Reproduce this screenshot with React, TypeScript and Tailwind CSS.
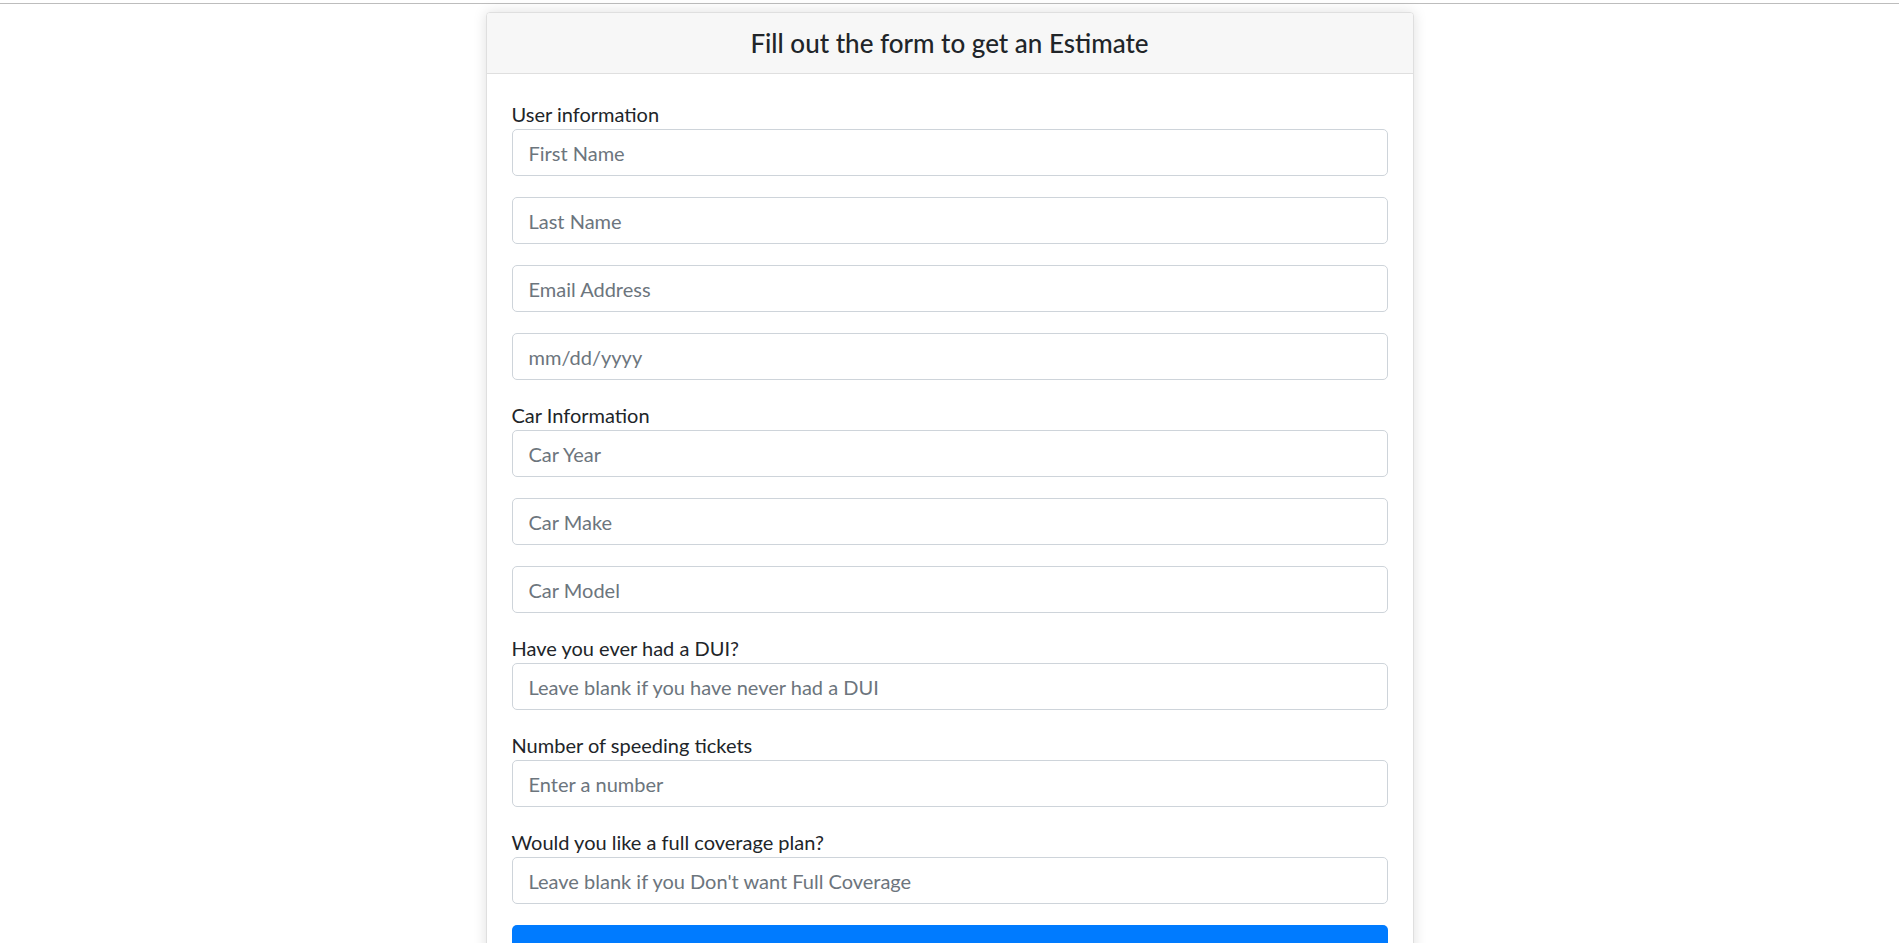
import { useState } from 'react'

const font = { fontFamily: 'Lato, "Liberation Sans", sans-serif' }

type Field = { name: string; placeholder: string; type?: string }

const groups: { label: string; fields: Field[] }[] = [
  {
    label: 'User information',
    fields: [
      { name: 'firstName', placeholder: 'First Name' },
      { name: 'lastName', placeholder: 'Last Name' },
      { name: 'email', placeholder: 'Email Address', type: 'email' },
      { name: 'dob', placeholder: 'mm/dd/yyyy' },
    ],
  },
  {
    label: 'Car Information',
    fields: [
      { name: 'carYear', placeholder: 'Car Year' },
      { name: 'carMake', placeholder: 'Car Make' },
      { name: 'carModel', placeholder: 'Car Model' },
    ],
  },
  {
    label: 'Have you ever had a DUI?',
    fields: [{ name: 'dui', placeholder: 'Leave blank if you have never had a DUI' }],
  },
  {
    label: 'Number of speeding tickets',
    fields: [{ name: 'tickets', placeholder: 'Enter a number' }],
  },
  {
    label: 'Would you like a full coverage plan?',
    fields: [{ name: 'coverage', placeholder: "Leave blank if you Don't want Full Coverage" }],
  },
]

const FormInput = ({ field, value, onChange }: { field: Field; value: string; onChange: (v: string) => void }) => (
  <input
    type={field.type ?? 'text'}
    name={field.name}
    value={value}
    onChange={(e) => onChange(e.target.value)}
    placeholder={field.placeholder}
    className="mb-[21px] block h-[47px] w-full rounded-[5px] border border-[#ced4da] bg-white px-4 text-[20px] text-[#495057] outline-none placeholder:text-[#6c757d] focus:border-[#80bdff]"
  />
)

export default function App() {
  const [values, setValues] = useState<Record<string, string>>({})

  return (
    <div className="min-h-screen bg-white" style={font}>
      <div className="h-[3px]" />
      <div className="h-px bg-[#bdbdbd]" />
      <div className="mx-auto mt-[8px] w-[928px] overflow-hidden rounded-[4px] border border-[#dfdfdf] bg-white shadow-[0_0_14px_rgba(0,0,0,0.13)]">
        <div className="flex h-[61px] items-center justify-center border-b border-[#dfdfdf] bg-[#f7f7f7]">
          <h4 className="text-[26px] font-medium text-[#212529]">Fill out the form to get an Estimate</h4>
        </div>
        <form className="px-[25px] pt-[26px] pb-[25px]" onSubmit={(e) => e.preventDefault()}>
          {groups.map((g) => (
            <div key={g.label}>
              <label className="block h-[29px] text-[20px] leading-[29px] text-[#212529]">{g.label}</label>
              {g.fields.map((f) => (
                <FormInput
                  key={f.name}
                  field={f}
                  value={values[f.name] ?? ''}
                  onChange={(v) => setValues((s) => ({ ...s, [f.name]: v }))}
                />
              ))}
            </div>
          ))}
          <button
            type="submit"
            className="block h-[48px] w-full rounded-[5px] bg-[#007bff] text-[20px] text-white"
          >
            Submit
          </button>
        </form>
      </div>
    </div>
  )
}
